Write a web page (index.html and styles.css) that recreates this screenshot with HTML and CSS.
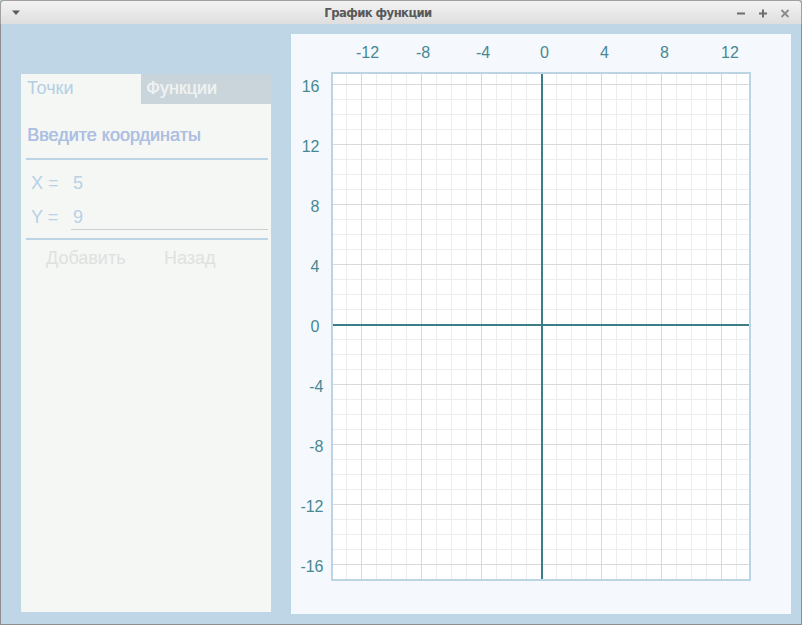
FILE: index.html
```html
<!DOCTYPE html>
<html lang="ru">
<head>
<meta charset="utf-8">
<title>График функции</title>
<link rel="stylesheet" href="styles.css">
</head>
<body>
<div class="window">
  <div class="titlebar">
    <svg class="tb-menu" width="10" height="8" viewBox="0 0 10 8"><path d="M1 1.5 L9 1.5 L5 6 Z" fill="#5b5b5b"/></svg>
    <div class="tb-title">График функции</div>
    <div class="tb-controls">
      <svg width="12" height="12" viewBox="0 0 12 12"><rect x="2" y="5.5" width="8" height="2" fill="#6e6e6e"/></svg>
      <svg width="12" height="12" viewBox="0 0 12 12"><rect x="2" y="5.5" width="8" height="2" fill="#6e6e6e"/><rect x="5" y="2.5" width="2" height="8" fill="#6e6e6e"/></svg>
      <svg width="12" height="12" viewBox="0 0 12 12"><path d="M2.5 3 L9.5 10 M9.5 3 L2.5 10" stroke="#8a8a8a" stroke-width="1.8"/></svg>
    </div>
  </div>
  <div class="content">
    <div class="left-panel">
      <div class="tabs">
        <div class="tab tab-active">Точки</div>
        <div class="tab tab-inactive">Функции</div>
      </div>
      <div class="form">
        <div class="heading">Введите координаты</div>
        <div class="sep"></div>
        <div class="row">
          <span class="lbl">X =</span>
          <span class="val">5</span>
        </div>
        <div class="row">
          <span class="lbl">Y =</span>
          <span class="val val-input">9</span>
        </div>
        <div class="sep sep2"></div>
        <div class="buttons">
          <span class="btn">Добавить</span>
          <span class="btn">Назад</span>
        </div>
      </div>
    </div>
    <div class="right-panel">
      <svg class="plot" width="500" height="580" viewBox="0 0 500 580" shape-rendering="crispEdges">
        <defs>
          <pattern id="minor" patternUnits="userSpaceOnUse" x="10" y="5" width="15" height="15">
            <rect x="0" y="0" width="1" height="15" fill="#ededed"/>
            <rect x="0" y="0" width="15" height="1" fill="#ededed"/>
          </pattern>
          <pattern id="major" patternUnits="userSpaceOnUse" x="10" y="50" width="60" height="60">
            <rect x="0" y="0" width="1" height="60" fill="#d9d9d9"/>
            <rect x="0" y="0" width="60" height="1" fill="#d9d9d9"/>
          </pattern>
        </defs>
        <rect x="40" y="38" width="420" height="509" fill="#ffffff"/>
        <rect x="42" y="40" width="416" height="505" fill="url(#minor)"/>
        <rect x="42" y="40" width="416" height="505" fill="url(#major)"/>
        <rect x="250" y="40" width="2" height="505" fill="#3b7e88"/>
        <rect x="42" y="290" width="416" height="2" fill="#3b7e88"/>
        <rect x="41" y="39" width="418" height="507" fill="none" stroke="#bcd5e5" stroke-width="2"/>
        <g class="lbl-x">
          <text x="65" y="24">-12</text>
          <text x="125" y="24">-8</text>
          <text x="185" y="24">-4</text>
          <text x="249" y="24">0</text>
          <text x="309" y="24">4</text>
          <text x="369" y="24">8</text>
          <text x="430" y="24">12</text>
        </g>
        <g class="lbl-y">
          <text x="28.5" y="58">16</text>
          <text x="28.5" y="118">12</text>
          <text x="28.5" y="178">8</text>
          <text x="28.5" y="238">4</text>
          <text x="28.5" y="298">0</text>
          <text x="32.5" y="358">-4</text>
          <text x="32.5" y="418">-8</text>
          <text x="32.5" y="478">-12</text>
          <text x="32.5" y="538">-16</text>
        </g>
      </svg>
    </div>
  </div>
</div>
</body>
</html>
```

FILE: styles.css
```css
html, body {
  margin: 0;
  padding: 0;
  background: #bed6e5;
}

body {
  width: 802px;
  height: 625px;
  overflow: hidden;
  font-family: "Liberation Sans", Arial, sans-serif;
}

.window {
  box-sizing: border-box;
  width: 802px;
  height: 625px;
  border: 1px solid #8e8e8e;
  border-top: none;
  border-radius: 4px 4px 0 0;
  display: flex;
  flex-direction: column;
  background: #bed6e5;
}

.titlebar {
  height: 24px;
  flex: none;
  display: flex;
  align-items: center;
  background: linear-gradient(#f3f3f3, #dedede);
  border-radius: 4px 4px 0 0;
  border-top: 1px solid #a0a0a0;
  box-sizing: border-box;
  margin: 0 -1px;
  border-left: 1px solid #a0a0a0;
  border-right: 1px solid #a0a0a0;
  padding: 0 10px 0 10px;
}

.tb-menu {
  flex: none;
  margin-top: 1px;
}

.tb-title {
  flex: 1;
  text-align: center;
  font-family: "DejaVu Sans Condensed", "DejaVu Sans", sans-serif;
  font-stretch: condensed;
  font-weight: bold;
  font-size: 13px;
  letter-spacing: -0.6px;
  color: #595959;
}

.tb-controls {
  display: flex;
  gap: 10px;
  flex: none;
}

.content {
  flex: 1;
  display: flex;
  gap: 20px;
  padding: 10px 10px 10px 20px;
}

.left-panel {
  width: 250px;
  height: 538px;
  margin-top: 40px;
  background: #f5f7f4;
  flex: none;
}

.tabs {
  display: flex;
  height: 30px;
  font-size: 18px;
  line-height: 28px;
}

.tab {
  box-sizing: border-box;
  padding-left: 6px;
}

.tab-active {
  width: 120px;
  color: #b3cfe5;
}

.tab-inactive {
  width: 130px;
  padding-left: 5px;
  background: #c9d5da;
  color: #eef1f2;
  text-shadow: 0.5px 0 0 #eef1f2;
}

.form {
  padding: 0 3px 0 5px;
  font-size: 18px;
  line-height: 22px;
}

.heading {
  margin-top: 20px;
  padding-left: 1px;
  color: #adbfe2;
  text-shadow: 0.5px 0 0 #adbfe2;
}

.sep {
  height: 2px;
  background: #bcd5e6;
  margin-top: 12px;
}

.row {
  display: flex;
  margin-top: 12px;
  padding-left: 5px;
  color: #b7d1e6;
}

.lbl {
  width: 40px;
  flex: none;
}

.val {
  flex: 1;
  padding-left: 2px;
}

.val-input {
  padding-bottom: 1px;
  border-bottom: 1px solid #c8cfd5;
}

.sep2 {
  margin-top: 8px;
}

.buttons {
  display: flex;
  margin-top: 7px;
  color: #dfe1df;
}

.btn {
  width: 118px;
  padding-left: 20px;
  box-sizing: border-box;
}

.right-panel {
  width: 500px;
  height: 580px;
  background: #f5f9fe;
  flex: none;
}

.plot {
  display: block;
}

.plot text {
  font-family: "Liberation Sans", Arial, sans-serif;
  font-size: 16px;
  fill: #478891;
}

.lbl-y text {
  text-anchor: end;
}
```
